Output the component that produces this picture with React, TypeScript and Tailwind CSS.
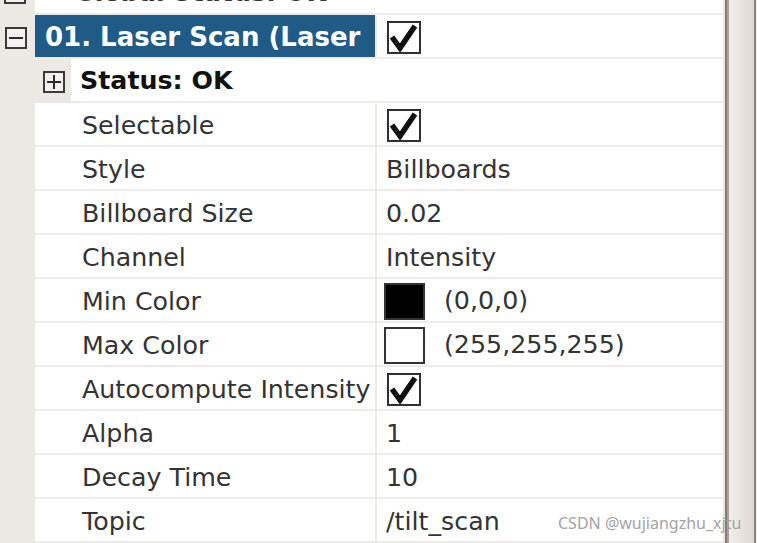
import React from 'react';

const LINE = 'border-[#eeeae6]';

function ExpandBox({ open }: { open: boolean }) {
  return (
    <div className="relative w-[22px] h-[22px] border-2 border-[#3a3a3a] bg-[#f4f2f0]">
      <div className="absolute left-[2px] right-[2px] top-[8px] h-[2px] bg-[#2a2a2a]" />
      {!open && <div className="absolute top-[2px] bottom-[2px] left-[8px] w-[2px] bg-[#2a2a2a]" />}
    </div>
  );
}

function Check() {
  return (
    <div className="w-[34px] h-[33px] border-2 border-[#2f2f2f] bg-white">
      <svg width="30" height="29" viewBox="0 0 30 29">
        <path d="M3 14 L11 25 L26 3" fill="none" stroke="#111" strokeWidth="5.5" strokeLinejoin="miter" />
      </svg>
    </div>
  );
}

function Swatch({ color }: { color: string }) {
  return <div className={`w-[41px] h-[37px] border-2 border-[#333] ${color}`} />;
}

type Prop = { label: string; value: React.ReactNode; pad?: string };

const props: Prop[] = [
  { label: 'Selectable', value: <Check />, pad: 'pl-[10px] pt-[2px]' },
  { label: 'Style', value: 'Billboards' },
  { label: 'Billboard Size', value: '0.02' },
  { label: 'Channel', value: 'Intensity' },
  {
    label: 'Min Color',
    pad: 'pl-[7px] pt-[2px]',
    value: (
      <div className="flex items-center">
        <Swatch color="bg-black" />
        <span className="ml-[19px]">(0,0,0)</span>
      </div>
    ),
  },
  {
    label: 'Max Color',
    pad: 'pl-[7px] pt-[2px]',
    value: (
      <div className="flex items-center">
        <Swatch color="bg-white" />
        <span className="ml-[19px]">(255,255,255)</span>
      </div>
    ),
  },
  { label: 'Autocompute Intensity', value: <Check />, pad: 'pl-[10px] pt-[2px]' },
  { label: 'Alpha', value: '1' },
  { label: 'Decay Time', value: '10' },
  { label: 'Topic', value: '/tilt_scan' },
];

export default function App() {
  return (
    <div className="relative w-[757px] h-[543px] overflow-hidden bg-white flex font-['DejaVu_Sans',sans-serif] text-[25.3px] text-[#333]">
      {/* tree */}
      <div className="w-[723px] shrink-0 flex flex-col bg-[#ece9e5] -mt-[29px]">
        {/* Global Status row (cut off) */}
        <div className="h-[44px] flex">
          <div className="w-[35px] flex items-center pl-[4px]">
            <ExpandBox open={false} />
          </div>
          <div className={`flex-1 bg-white border-b-2 ${LINE} flex items-center pl-[9px] pt-[2px] font-bold whitespace-nowrap`}>
            ✓ Global Status: OK
          </div>
        </div>

        {/* Laser Scan row */}
        <div className="h-[44px] flex">
          <div className="w-[35px] flex items-center pl-[5px] pt-[2px]">
            <ExpandBox open />
          </div>
          <div className={`flex-1 flex bg-white border-b-2 ${LINE}`}>
            <div className="w-[340px] bg-[#1f5b86] text-white font-bold text-[26px] flex items-center pl-[10px] pt-[2px] whitespace-nowrap">
              01. Laser Scan (Laser
            </div>
            <div className="w-[2px] bg-[#eeeae6]" />
            <div className="flex-1 flex items-center pl-[10px] pt-[3px]">
              <Check />
            </div>
          </div>
        </div>

        {/* Status row */}
        <div className="h-[44px] flex">
          <div className="w-[71px] flex items-center pl-[43px] pt-[2px]">
            <ExpandBox open={false} />
          </div>
          <div className={`flex-1 bg-white border-b-2 ${LINE} flex items-center pl-[9px] pt-[2px] font-bold text-[#111]`}>
            Status: OK
          </div>
        </div>

        {props.map((p) => (
          <div key={p.label} className="h-[44px] flex">
            <div className="w-[35px]" />
            <div className={`flex-1 flex bg-white border-b-2 ${LINE}`}>
              <div className="w-[340px] flex items-center pl-[47px] pt-[3px] whitespace-nowrap">
                {p.label}
              </div>
              <div className="w-[2px] bg-[#eeeae6]" />
              <div className={`flex-1 flex items-center ${p.pad ?? 'pl-[9px] pt-[3px]'} whitespace-nowrap`}>
                {p.value}
              </div>
            </div>
          </div>
        ))}
      </div>

      {/* scrollbar */}
      <div className="w-[2px] bg-[#ebe6e2]" />
      <div className="w-[2px] bg-[#857d76]" />
      <div className="w-[2px] bg-[#aaa29b]" />
      <div className="w-[25px] bg-gradient-to-r from-[#f1eeec] to-[#ddd8d3]" />
      <div className="w-[2px] bg-[#8a827b]" />
      <div className="flex-1 bg-[#f0eeec]" />

      {/* watermark */}
      <div className="absolute left-[558px] top-[515px] leading-none text-[16px] text-[#a3a3a3] font-['Noto_Sans',sans-serif] whitespace-nowrap">
        CSDN @wujiangzhu_xjtu
      </div>
    </div>
  );
}
